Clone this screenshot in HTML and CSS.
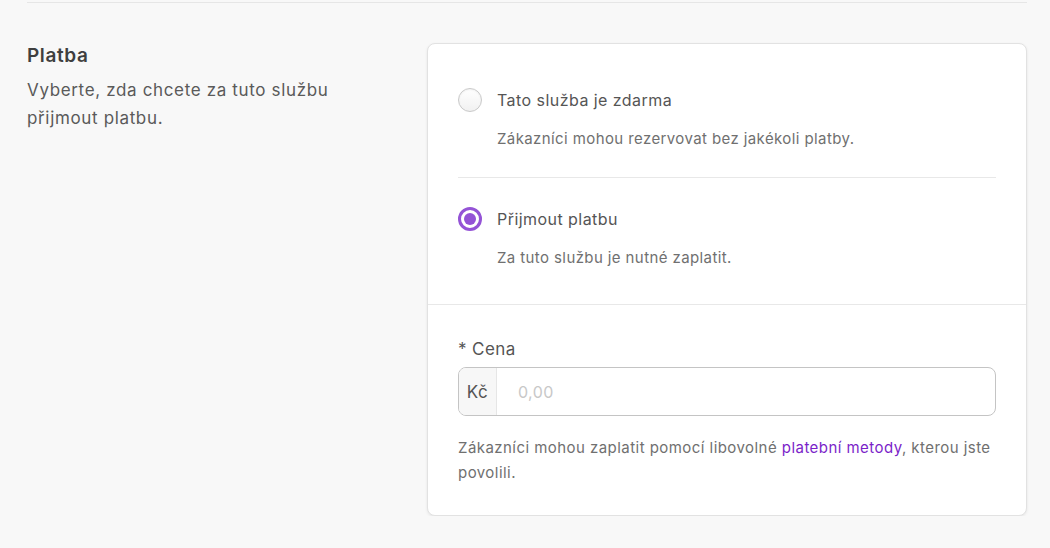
FILE: index.html
```html
<!DOCTYPE html>
<html lang="cs">
<head>
<meta charset="utf-8">
<link rel="stylesheet" href="styles.css">
</head>
<body>
<div class="page">
  <section class="section">
    <div class="intro">
      <h2 class="intro-title">Platba</h2>
      <p class="intro-text">Vyberte, zda chcete za tuto službu přijmout platbu.</p>
    </div>
    <div class="card">
      <div class="options">
        <div class="option">
          <div class="option-row">
            <span class="radio"></span>
            <span class="option-label">Tato služba je zdarma</span>
          </div>
          <p class="option-desc">Zákazníci mohou rezervovat bez jakékoli platby.</p>
        </div>
        <div class="option option-last">
          <div class="option-row">
            <span class="radio radio-checked"></span>
            <span class="option-label">Přijmout platbu</span>
          </div>
          <p class="option-desc">Za tuto službu je nutné zaplatit.</p>
        </div>
      </div>
      <div class="price">
        <label class="price-label">* Cena</label>
        <div class="input-group">
          <span class="input-prefix">Kč</span>
          <span class="input-field">0,00</span>
        </div>
        <p class="help">Zákazníci mohou zaplatit pomocí libovolné <a class="link">platební metody</a>, kterou jste povolili.</p>
      </div>
    </div>
  </section>
</div>
</body>
</html>
```
FILE: styles.css
```css
html, body {
  margin: 0;
  padding: 0;
  background: #f8f8f8;
}
body {
  font-family: "Inter", "Open Sans", sans-serif;
  color: #555;
}
.page {
  padding: 2px 23px 0 27px;
}
.section {
  border-top: 1px solid #e6e6e6;
  padding-top: 40px;
  display: grid;
  grid-template-columns: 400px 600px;
  align-items: start;
}
.intro-title {
  margin: 1px 0 0;
  font-size: 19px;
  line-height: 24px;
  font-weight: 600;
  letter-spacing: 0.6px;
  color: #3f3f3f;
}
.intro-text {
  margin: 8px 0 0;
  font-size: 17px;
  line-height: 28px;
  letter-spacing: 0.65px;
  color: #5a5a5a;
  width: 340px;
}
.card {
  background: #fff;
  border: 1px solid #e2e2e2;
  border-radius: 8px;
  box-shadow: 0 1px 3px rgba(0,0,0,0.08);
}
.options {
  padding: 15px 30px 8px;
}
.option {
  padding: 29px 0 27px;
  border-bottom: 1px solid #e8e8e8;
}
.option-last {
  border-bottom: none;
}
.option-row {
  display: flex;
  align-items: center;
  gap: 15px;
  height: 24px;
}
.radio {
  box-sizing: border-box;
  width: 24px;
  height: 24px;
  border-radius: 50%;
  border: 1px solid #c9c9c9;
  background: linear-gradient(#ffffff, #f1f1f1);
  box-shadow: inset 0 1px 2px rgba(0,0,0,0.06);
  display: flex;
  align-items: center;
  justify-content: center;
}
.radio-checked {
  border: 3px solid #9453d6;
  background: #fff;
  box-shadow: none;
}
.radio-checked::after {
  content: "";
  width: 12px;
  height: 12px;
  border-radius: 50%;
  background: #9453d6;
}
.option-label {
  font-size: 16px;
  line-height: 24px;
  letter-spacing: 0.45px;
  color: #555;
}
.option-desc {
  margin: 16px 0 0 39px;
  font-size: 15px;
  line-height: 22px;
  letter-spacing: 0.4px;
  color: #707070;
}
.price {
  border-top: 1px solid #e8e8e8;
  padding: 32px 30px 30px;
}
.price-label {
  display: block;
  font-size: 17px;
  line-height: 24px;
  letter-spacing: 0.4px;
  color: #555;
}
.input-group {
  margin-top: 6px;
  display: flex;
  height: 49px;
  box-sizing: border-box;
  border: 1px solid #c4c4c4;
  border-radius: 8px;
  overflow: hidden;
}
.input-prefix {
  width: 37px;
  background: #f7f7f7;
  border-right: 1px solid #e6e6e6;
  display: flex;
  align-items: center;
  justify-content: center;
  font-size: 17px;
  letter-spacing: 0.4px;
  color: #555;
}
.input-field {
  flex: 1;
  display: flex;
  align-items: center;
  padding-left: 21px;
  font-size: 16px;
  letter-spacing: 0.4px;
  color: #c8c8c8;
}
.help {
  margin: 19px 0 0;
  font-size: 15px;
  line-height: 25px;
  letter-spacing: 0.45px;
  color: #707070;
}
.link {
  color: #7b1fc9;
  text-decoration: none;
}
```
